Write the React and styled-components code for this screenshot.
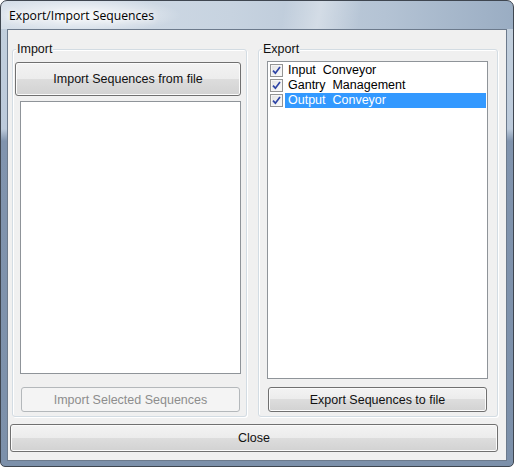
import React from 'react';
import styled, { createGlobalStyle } from 'styled-components';

const GlobalStyle = createGlobalStyle`
  html, body {
    margin: 0;
    padding: 0;
    background: #ffffff;
  }
`;

const Window = styled.div`
  box-sizing: border-box;
  width: 514px;
  height: 467px;
  border: 1px solid #3f4650;
  border-radius: 7px 7px 5px 5px;
  padding: 0 6px 5px 6px;
  display: flex;
  flex-direction: column;
  overflow: hidden;
  background:
    radial-gradient(ellipse 100px 18px at 80px 14px, rgba(255, 255, 255, 0.9), rgba(255, 255, 255, 0) 100%),
    linear-gradient(100deg, rgba(255, 255, 255, 0) 55%, rgba(255, 255, 255, 0.35) 62%, rgba(255, 255, 255, 0) 70%) 0 0 / 100% 28px no-repeat,
    linear-gradient(90deg, #d6dfe9 0%, #c7d3e0 45%, #b4c3d4 75%, #9aadc3 100%) 0 0 / 100% 28px no-repeat,
    linear-gradient(180deg, #c3d0dd 0px, #bccadb 128px, #8194ae 140px, #7c90aa 100%);
`;

const TitleBar = styled.div`
  height: 28px;
  display: flex;
  align-items: center;
  padding-left: 2px;
  font-family: 'Open Sans', 'Noto Sans', sans-serif;
  font-size: 12.2px;
  color: #000;
  text-shadow: 0 0 6px #ffffff, 0 0 10px #ffffff;
`;

const Client = styled.div`
  flex: 1;
  border: 1px solid #6c7a8c;
  background: #f0f0f0;
  padding: 19px 0 0 4px;
  display: flex;
  flex-direction: column;
  font-family: 'Liberation Sans', Arial, sans-serif;
  font-size: 12.5px;
  color: #000;
`;

const Columns = styled.div`
  display: flex;
  gap: 11px;
`;

const Group = styled.div`
  box-sizing: border-box;
  width: ${p => p.$width}px;
  height: 368px;
  border: 1px solid #d3dce3;
  border-radius: 3px;
  box-shadow: inset 1px 1px 0 #ffffff, 1px 1px 0 #ffffff;
  display: flex;
  flex-direction: column;
  align-items: flex-start;
`;

const Legend = styled.span`
  margin: -8px 0 -6px 3px;
  padding: 0 1px;
  line-height: 14px;
  background: #f0f0f0;
  color: #111;
`;

const Button = styled.div`
  box-sizing: border-box;
  width: ${p => p.$width}px;
  height: ${p => p.$height}px;
  margin-top: ${p => p.$mt || 0}px;
  margin-left: ${p => p.$ml || 0}px;
  display: flex;
  align-items: center;
  justify-content: center;
  border: 1px solid #707070;
  border-radius: 3px;
  box-shadow: inset 0 0 0 1px #fbfbfb;
  background: linear-gradient(180deg, #f3f3f3 0%, #ececec 50%, #dddddd 50%, #d2d2d2 100%);
  color: #111;
  white-space: nowrap;

  ${p =>
    p.$disabled &&
    `
    border-color: #b4b8bb;
    box-shadow: none;
    background: #f4f4f4;
    color: #8d8d8d;
  `}
`;

const ListBox = styled.div`
  box-sizing: border-box;
  width: 221px;
  height: ${p => p.$height}px;
  margin-top: ${p => p.$mt}px;
  margin-left: ${p => p.$ml}px;
  border: 1px solid #8f9499;
  background: #ffffff;
  padding: 1px 1px 0 2px;
  display: flex;
  flex-direction: column;
`;

const Row = styled.div`
  height: 15px;
  display: flex;
  align-items: center;
`;

const CheckBox = styled.span`
  box-sizing: border-box;
  width: 13px;
  height: 13px;
  flex: none;
  border: 1px solid #949494;
  background: linear-gradient(135deg, #e2e2e2 0%, #f4f4f4 70%, #fdfdfd 100%);
  box-shadow: inset 0 0 0 1px #f6f6f6;
  display: flex;
  align-items: center;
  justify-content: center;
`;

const ItemText = styled.span`
  flex: 1;
  height: 15px;
  line-height: 15px;
  margin-left: 2px;
  padding-left: 3px;
  white-space: pre;
  background: ${p => (p.$selected ? '#3399ff' : 'transparent')};
  color: ${p => (p.$selected ? '#ffffff' : '#000000')};
`;

const Check = () => (
  <svg width="9" height="9" viewBox="0 0 9 9">
    <path d="M1 4.6 L3.4 7.2 L8 1" fill="none" stroke="#2f45a6" strokeWidth="1.7" />
  </svg>
);

const sequences = [
  { name: 'Input  Conveyor' },
  { name: 'Gantry  Management' },
  { name: 'Output  Conveyor', selected: true },
];

const App = () => (
  <>
    <GlobalStyle />
    <Window>
      <TitleBar>Export/Import Sequences</TitleBar>
      <Client>
        <Columns>
          <Group $width={235}>
            <Legend>Import</Legend>
            <Button $width={226} $height={34} $mt={12} $ml={2}>
              Import Sequences from file
            </Button>
            <ListBox $height={273} $mt={5} $ml={7} />
            <Button $width={219} $height={25} $mt={13} $ml={8} $disabled>
              Import Selected Sequences
            </Button>
          </Group>
          <Group $width={240}>
            <Legend>Export</Legend>
            <ListBox $height={318} $mt={11} $ml={8}>
              {sequences.map(seq => (
                <Row key={seq.name}>
                  <CheckBox>
                    <Check />
                  </CheckBox>
                  <ItemText $selected={seq.selected}>{seq.name}</ItemText>
                </Row>
              ))}
            </ListBox>
            <Button $width={219} $height={25} $mt={8} $ml={9}>
              Export Sequences to file
            </Button>
          </Group>
        </Columns>
        <Button $width={488} $height={28} $mt={7} $ml={-2}>
          Close
        </Button>
      </Client>
    </Window>
  </>
);

export default App;
